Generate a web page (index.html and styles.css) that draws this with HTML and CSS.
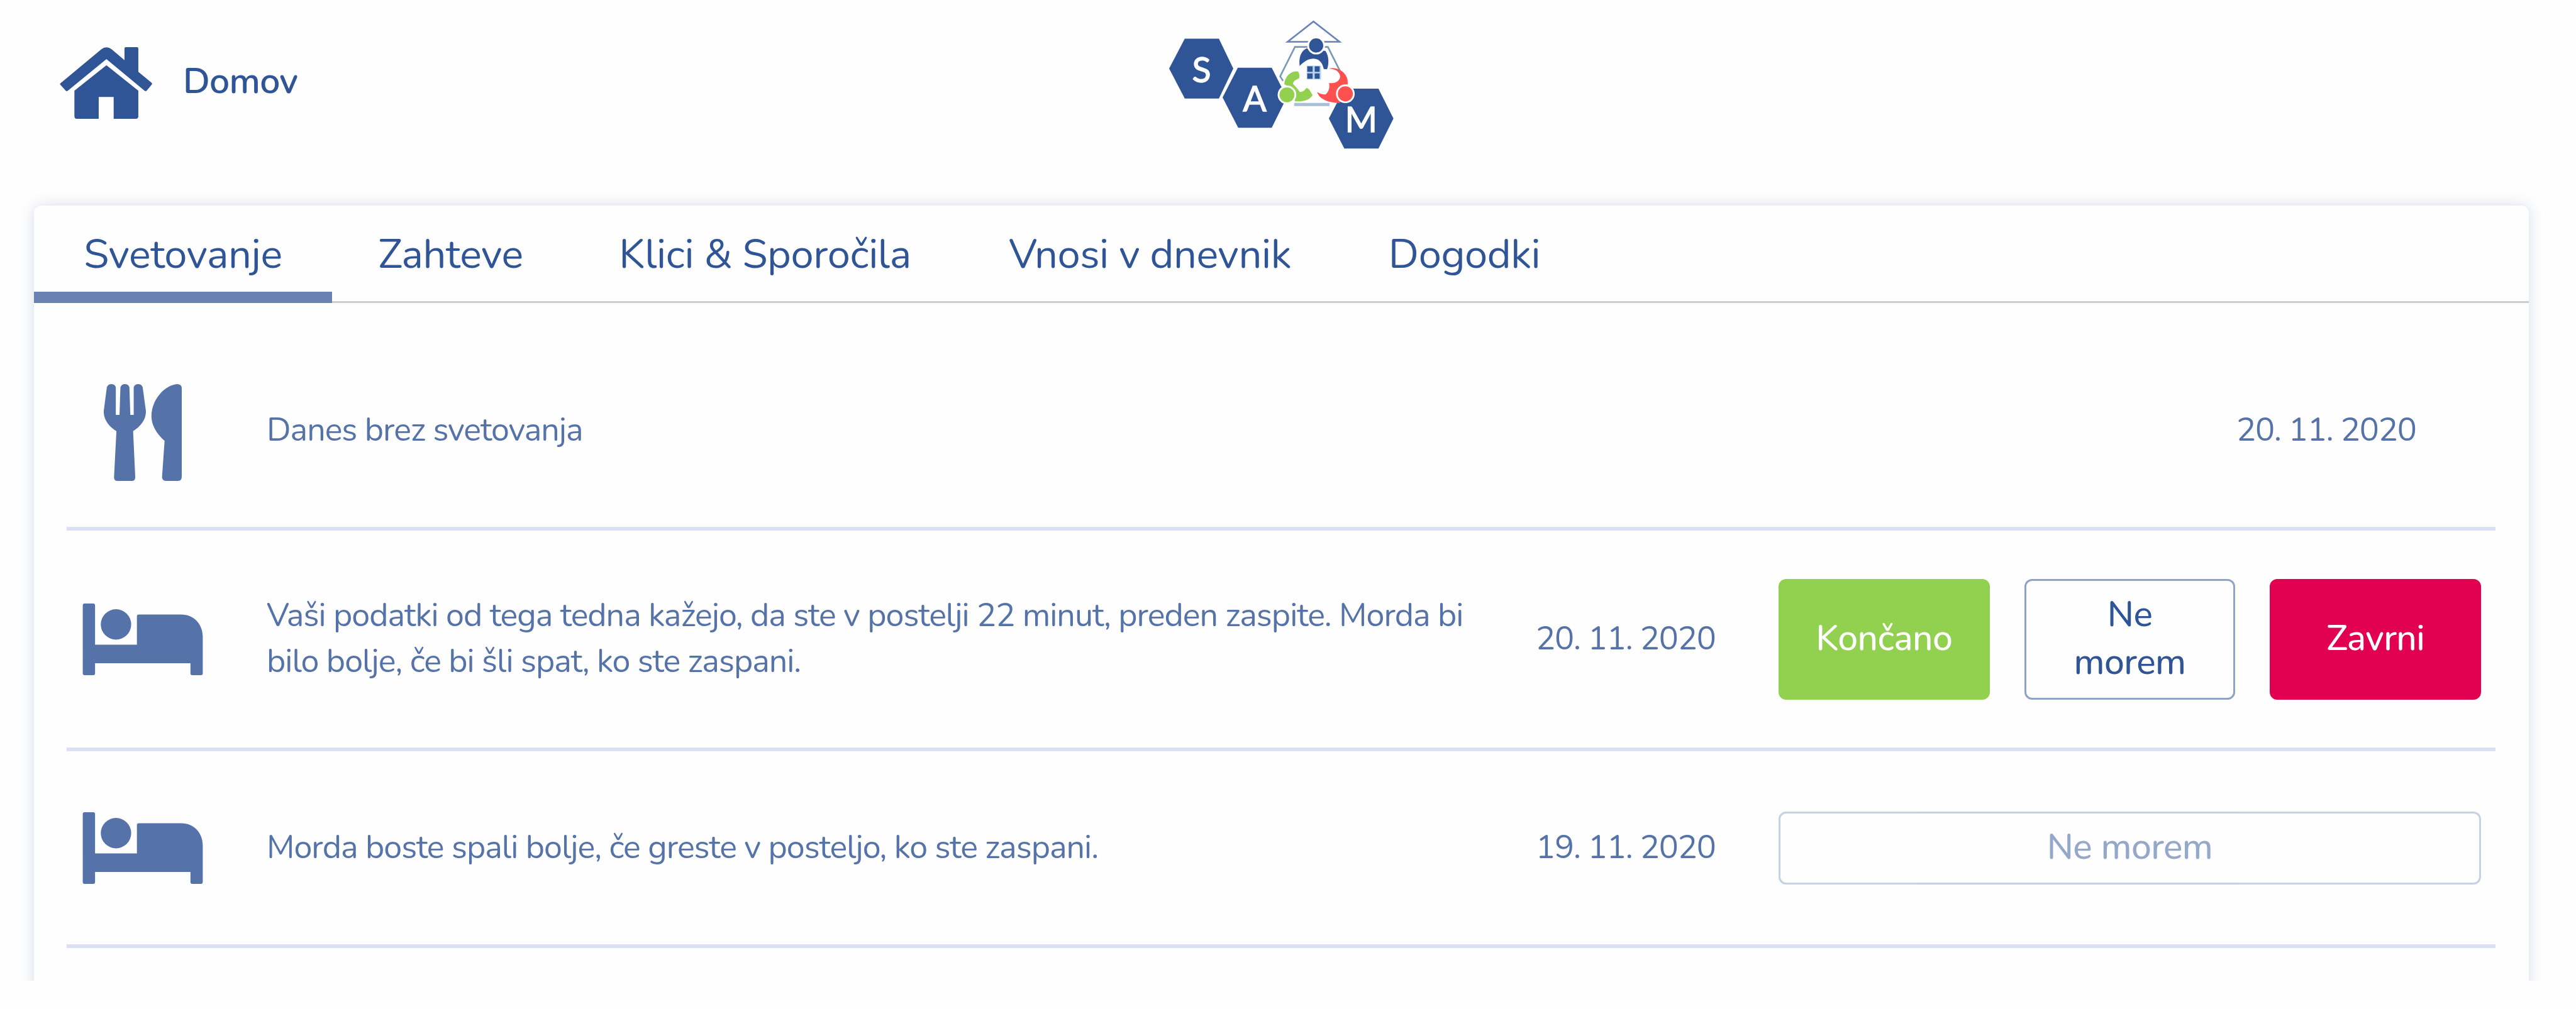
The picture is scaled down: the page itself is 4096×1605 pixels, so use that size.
FILE: index.html
```html
<!DOCTYPE html>
<html lang="sl">
<head>
    <meta charset="UTF-8">
    <title>SAM - Svetovanje</title>
    <link rel="stylesheet" href="styles.css">
</head>
<body>
    <!-- Shared icon shapes -->
    <svg class="sprite">
        <symbol id="bed" viewBox="0 0 195 116.5">
            <path d="M3 0H17Q20 0 20 3V67H88V21Q88 18 91 18H160C181 18 195 34 195 54V113.500Q195 116.500 192 116.500H178Q175 116.500 175 113.500V97H20V113.500Q20 116.500 17 116.500H3Q0 116.500 0 113.500V3Q0 0 3 0Z"/>
            <circle cx="54" cy="34" r="24.700"/>
        </symbol>
    </svg>

    <div class="page">
        <header class="header">
            <a class="home" href="#">
                <svg class="home-icon" viewBox="0 0 149.300 116">
                    <path d="M1 58.500L67 3.500Q75.400-3 84 3.500L104.600 21V2Q104.600 0 106.600 0H125Q127 0 127 2V40L148.300 57.500Q150 59 148.500 60.800L140.500 70.500Q139 72 137 70.500L75.400 19.300L13 70.500Q11 72 9.500 70.500L1 61Q-.4 59.700 1 58.500Z"/>
                    <path d="M75.400 29.300L127 70.500V112Q127 116 123 116H87.100V80.700H62.900V116H27.600Q23.600 116 23.600 112V70.500Z"/>
                </svg>
                <span class="home-label">Domov</span>
            </a>
            <svg class="logo" viewBox="96 64 1092 632">
                <!-- Hexagons -->
                <g class="blue">
                    <path d="M96 302L172 157H338L408 302L338 448H172Z"/>
                    <path d="M356 443L430 298H595L668 443L595 590H432Z"/>
                    <path d="M873 545L948 400H1114L1187 545L1114 691H948Z"/>
                </g>
                <path class="frame-mask" d="M638 340L708 194H870L944 340L876 478H708L650 410Z"/>
                <path class="frame" d="M650 362L636 340L708 197H868L930 320"/>
                <path class="frame-bottom" d="M704 477H876"/>
                <path class="roof" d="M672 172L798 73L925 172Z"/>
                <!-- Letters -->
                <text class="letter" x="254" y="369">S</text>
                <text class="letter" x="512" y="511">A</text>
                <text class="letter" x="1030" y="611">M</text>
                <!-- People -->
                <path class="blue" d="M764 204C735 218 726 252 731 290C750 268 774 254 799 254C826 255 842 275 848 304L864 306C874 280 874 240 856 216Z"/>
                <path class="green" d="M656 378C660 335 694 310 724 317Q733 330 728 350C714 356 698 362 699 378C710 388 722 402 731 416C745 417 755 408 765 396L777 404L794 431C780 455 745 465 708 461L690 400Z"/>
                <path class="red" d="M872 302C920 290 972 328 964 380L925 470C870 468 826 452 816 416C830 426 845 430 857 428C872 414 878 398 874 372C902 378 924 364 928 342C926 318 906 304 872 302Z"/>
                <circle class="blue ring" cx="811" cy="190" r="39"/>
                <circle class="green ring" cx="669" cy="430" r="41"/>
                <circle class="red ring" cx="953" cy="425" r="41"/>
                <!-- Window -->
                <rect class="window" x="765" y="288" width="70" height="67"/>
                <path class="blue" d="M768 291H794V318H768ZM804 291H828V318H804ZM768 326H794V352H768ZM804 326H828V352H804Z"/>
            </svg>
        </header>

        <main class="card">
            <nav class="tabs">
                <a class="tab tab-active" href="#">Svetovanje</a>
                <a class="tab tab-requests" href="#">Zahteve</a>
                <a class="tab tab-calls" href="#">Klici &amp; Sporočila</a>
                <a class="tab tab-diary" href="#">Vnosi v dnevnik</a>
                <a class="tab tab-events" href="#">Dogodki</a>
            </nav>

            <div class="list">
                <div class="row row-empty">
                    <div class="icon">
                        <svg class="food-icon" viewBox="0 0 126.300 156.800">
                            <path d="M5 5Q7 0 12 0Q18 0 19.500 5V50H25.500L27 5Q29 0 34 0Q40 0 41.500 5L43 50H48.500V5Q50 0 56 0Q61 0 63 5L68.200 43C69 58 58 70 47.500 76L51 151Q51 156.800 45.500 156.800H22Q16.600 156.800 16.600 151L20.500 76C10 70-1 58 0 43Z"/>
                            <path d="M119 0Q126.300 0 126.300 7V150Q126.300 156.800 120 156.800H101Q94.400 156.800 94.400 150L98.500 92C85 80 77.200 66 77.200 52C77.200 24 100 1 119 0Z"/>
                        </svg>
                    </div>
                    <p class="text">Danes brez svetovanja</p>
                    <span class="date">20. 11. 2020</span>
                </div>

                <div class="row row-open">
                    <div class="icon"><svg class="bed-icon"><use href="#bed"/></svg></div>
                    <p class="text">Vaši podatki od tega tedna kažejo, da ste v postelji 22 minut, preden zaspite. Morda bi bilo bolje, če bi šli spat, ko ste zaspani.</p>
                    <span class="date">20. 11. 2020</span>
                    <div class="actions">
                        <button class="btn btn-done">Končano</button>
                        <button class="btn btn-outline">Ne morem</button>
                        <button class="btn btn-reject">Zavrni</button>
                    </div>
                </div>

                <div class="row row-closed">
                    <div class="icon"><svg class="bed-icon"><use href="#bed"/></svg></div>
                    <p class="text">Morda boste spali bolje, če greste v posteljo, ko ste zaspani.</p>
                    <span class="date">19. 11. 2020</span>
                    <div class="actions">
                        <button class="btn btn-outline" disabled>Ne morem</button>
                    </div>
                </div>
            </div>
        </main>
    </div>
</body>
</html>
```
FILE: styles.css
```css
* {
    box-sizing: border-box;
}

body {
    margin: 0;
    background-color: #fefefe;
    color: #2f5597;
    font-family: Nunito, Lato, "Noto Sans", sans-serif;
}

a {
    color: inherit;
    text-decoration: none;
}

.sprite {
    display: none;
}

.page {
    height: 1560px;
    overflow: hidden;
}

/* Header */
.header {
    display: grid;
    grid-template-columns: 1fr auto 1fr;
    align-items: start;
    height: 327px;
    padding: 31px 76px 0 54px;
}

.home {
    display: flex;
    align-items: center;
    margin: 44px 0 0 41px;
}

.home-icon {
    width: 147px;
    height: 114px;
    fill: #2f5597;
}

.home-label {
    margin: -6px 0 0 49px;
    font-size: 57px;
    font-weight: 600;
    line-height: 78px;
    letter-spacing: -0.7px;
}

.logo {
    width: 357px;
    height: 207px;
}

.blue {
    fill: #2f5597;
}

.green {
    fill: #92d050;
}

.red {
    fill: #ff5050;
}

.ring {
    stroke: #fefefe;
    stroke-width: 9px;
}

.frame-mask {
    fill: #fefefe;
}

.frame,
.frame-bottom,
.roof {
    fill: none;
    stroke: #7898ba;
    stroke-width: 8px;
}

.frame-bottom {
    stroke: #a9bfd4;
    stroke-width: 15px;
}

.roof {
    stroke: #6683ba;
}

.window {
    fill: #b9d5eb;
}

.letter {
    fill: #fefefe;
    stroke: #fefefe;
    stroke-width: 4px;
    font-family: Lato, sans-serif;
    font-size: 170px;
    text-anchor: middle;
}

/* Card with tabs */
.card {
    height: 1400px;
    margin: 0 75px 0 54px;
    border-radius: 12px;
    box-shadow: 0 0 22px rgba(47, 85, 151, 0.2);
}

.tabs {
    display: flex;
    height: 155px;
    border-bottom: 3px solid #cccccc;
}

.tab {
    height: 155px;
    padding-top: 33px;
    font-size: 65px;
    line-height: 90px;
    letter-spacing: -0.4px;
    text-align: center;
    white-space: nowrap;
}

.tab-active {
    width: 474px;
    border-bottom: 18px solid #6982b3;
}

.tab-requests {
    width: 377px;
}

.tab-calls {
    width: 623px;
}

.tab-diary {
    width: 601px;
}

.tab-events {
    width: 399px;
}

/* Advice list */
.list {
    padding: 55px 53px 0 52px;
}

.row {
    display: flex;
    align-items: center;
    padding-right: 23px;
    border-bottom: 6px solid #dbe0f4;
    color: #5573a9;
}

.row-empty {
    height: 307px;
}

.row-open {
    height: 351px;
}

.row-closed {
    height: 313px;
}

.icon {
    display: flex;
    justify-content: center;
    width: 241px;
    margin-right: 77px;
    padding-top: 1px;
    fill: #5573a9;
}

.food-icon {
    width: 124px;
    height: 154px;
}

.bed-icon {
    width: 192px;
    height: 114px;
}

.text {
    width: 1935px;
    margin: 0;
    padding-bottom: 3px;
    font-size: 52px;
    line-height: 73px;
    letter-spacing: -1px;
}

.date {
    width: 284px;
    margin-left: auto;
    padding-bottom: 2px;
    font-size: 52px;
    letter-spacing: -1.2px;
    white-space: nowrap;
}

.row-empty .text,
.row-empty .date {
    padding-bottom: 8px;
}

.row-empty .date {
    margin-right: 105px;
}

.actions {
    display: flex;
    gap: 55px;
    width: 1117px;
    margin-left: 102px;
}

.btn {
    flex: 1;
    padding: 15px 55px 19px;
    border: 3px solid transparent;
    border-radius: 12px;
    background-color: transparent;
    color: #fefefe;
    font-family: inherit;
    font-size: 57px;
    font-weight: 500;
    line-height: 76px;
    letter-spacing: -0.6px;
}

.btn-done {
    background-color: #92d050;
    border-color: #92d050;
}

.btn-outline {
    border-color: #8fa3c9;
    color: #2f5597;
}

.btn-outline:disabled {
    opacity: 0.5;
}

.btn-reject {
    background-color: #e20050;
    border-color: #e20050;
}
```
